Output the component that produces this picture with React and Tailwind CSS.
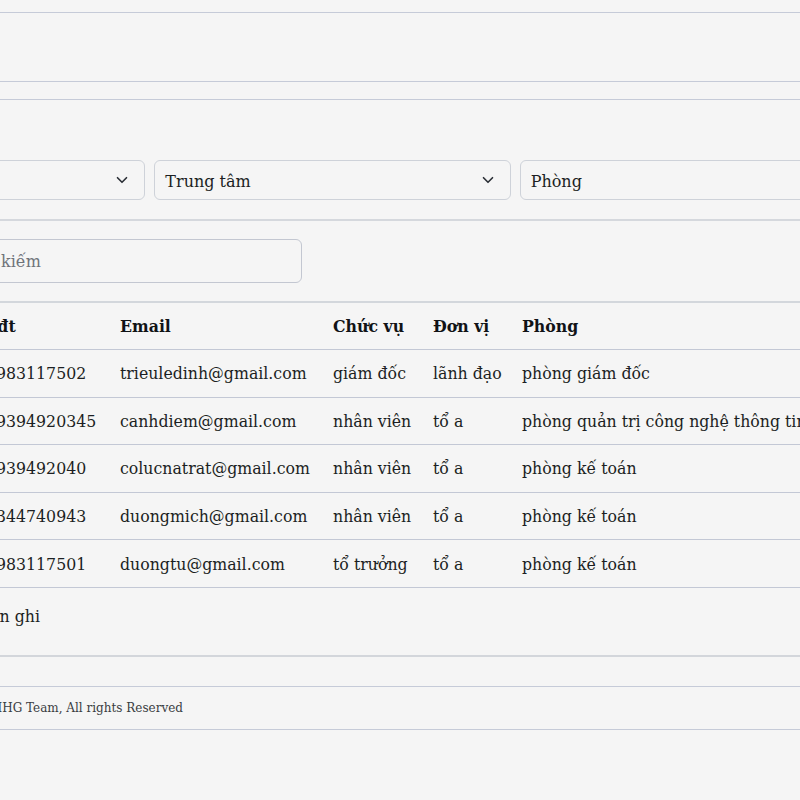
import { useState } from 'react'

const STAFF = [
  { stt: 1, name: 'Triệu Lê Định', phone: '0983117502', email: 'trieuledinh@gmail.com', role: 'giám đốc', unit: 'lãnh đạo', room: 'phòng giám đốc' },
  { stt: 2, name: 'Cảnh Điềm', phone: '09394920345', email: 'canhdiem@gmail.com', role: 'nhân viên', unit: 'tổ a', room: 'phòng quản trị công nghệ thông tin' },
  { stt: 3, name: 'Cô Lực', phone: '0939492040', email: 'colucnatrat@gmail.com', role: 'nhân viên', unit: 'tổ a', room: 'phòng kế toán' },
  { stt: 4, name: 'Dương Mịch', phone: '0344740943', email: 'duongmich@gmail.com', role: 'nhân viên', unit: 'tổ a', room: 'phòng kế toán' },
  { stt: 5, name: 'Dương Tử', phone: '0983117501', email: 'duongtu@gmail.com', role: 'tổ trưởng', unit: 'tổ a', room: 'phòng kế toán' },
]

function Chevron() {
  return (
    <svg width="12" height="12" viewBox="0 0 16 16" fill="none" stroke="#2b2f36" strokeWidth="2.2" strokeLinecap="round" strokeLinejoin="round">
      <path d="M2 5l6 6 6-6" />
    </svg>
  )
}

function Select({ label, arrow = true }) {
  return (
    <div className="h-10 flex items-center justify-between pl-[10px] pr-4 border border-[#ced2d9] rounded-md bg-[#f5f5f5]">
      <span className="pt-[3px] text-[16px] text-[#1c1f23]">{label}</span>
      {arrow && <Chevron />}
    </div>
  )
}

const cell = 'px-3 pt-[12.3px] pb-[10.3px] leading-6 whitespace-nowrap'

export default function App() {
  const [query, setQuery] = useState('')

  return (
    <div className="min-h-screen bg-[#f5f5f5] overflow-hidden font-['DejaVu_Serif',serif] text-[15.75px] text-[#1c1f23]">
      <div className="-ml-[211px] w-[1087px]">
        {/* Top bar */}
        <div className="h-3" />
        <header className="h-[70px] border-y border-[#c6cbd8]" />
        <div className="h-[17px]" />

        {/* Filters */}
        <section className="border-t border-[#c6cbd8] pt-[60px]">
          <div className="grid grid-cols-3 gap-[9px]">
            <Select label="Khối" />
            <Select label="Trung tâm" />
            <Select label="Phòng" arrow={false} />
          </div>
          <div className="mt-[19px] h-[2px] bg-[#d5d8dd]" />

          {/* Search */}
          <div className="mt-[18px] ml-[163px] w-[350px]">
            <input
              value={query}
              onChange={e => setQuery(e.target.value)}
              placeholder="Tìm kiếm"
              className="w-full h-[44px] px-3 border border-[#c3c7d1] rounded-md bg-[#f5f5f5] text-[16px] placeholder:text-[#6f737a] outline-none"
            />
          </div>

          {/* Staff table */}
          <table className="mt-[18px] w-[1087px] table-fixed border-collapse border-t-2 border-[#d3d7dc] text-left">
            <colgroup>
              <col className="w-[50px]" />
              <col className="w-[135px]" />
              <col className="w-[134px]" />
              <col className="w-[213px]" />
              <col className="w-[100px]" />
              <col className="w-[89px]" />
              <col />
            </colgroup>
            <thead>
              <tr className="border-b border-[#c3c8d5]">
                {['STT', 'Họ tên', 'Sđt', 'Email', 'Chức vụ', 'Đơn vị', 'Phòng'].map(h => (
                  <th key={h} className="px-3 pt-[12px] pb-[10px] leading-6 font-bold text-[#111316] whitespace-nowrap overflow-hidden">{h}</th>
                ))}
              </tr>
            </thead>
            <tbody>
              {STAFF.map(s => (
                <tr key={s.stt} className="border-b border-[#c3c8d5]">
                  <td className={cell + ' overflow-hidden'}>{s.stt}</td>
                  <td className={cell + ' overflow-hidden'}>{s.name}</td>
                  <td className={cell}>{s.phone}</td>
                  <td className={cell}>{s.email}</td>
                  <td className={cell}>{s.role}</td>
                  <td className={cell}>{s.unit}</td>
                  <td className={cell}>{s.room}</td>
                </tr>
              ))}
            </tbody>
          </table>

          <div className="mt-[17px] w-[251px] text-right leading-6 whitespace-nowrap">Tổng số: {STAFF.length} bản ghi</div>
          <div className="mt-[26px] h-[2px] bg-[#d3d6db]" />
        </section>

        {/* Footer */}
        <footer className="mt-[29px] h-[44px] border-y border-[#c6cbd8] flex items-center">
          <div className="w-[394px] text-right text-[12px] text-[#3a3d42] whitespace-nowrap">© 2024 HHG Team, All rights Reserved</div>
        </footer>
      </div>
    </div>
  )
}
